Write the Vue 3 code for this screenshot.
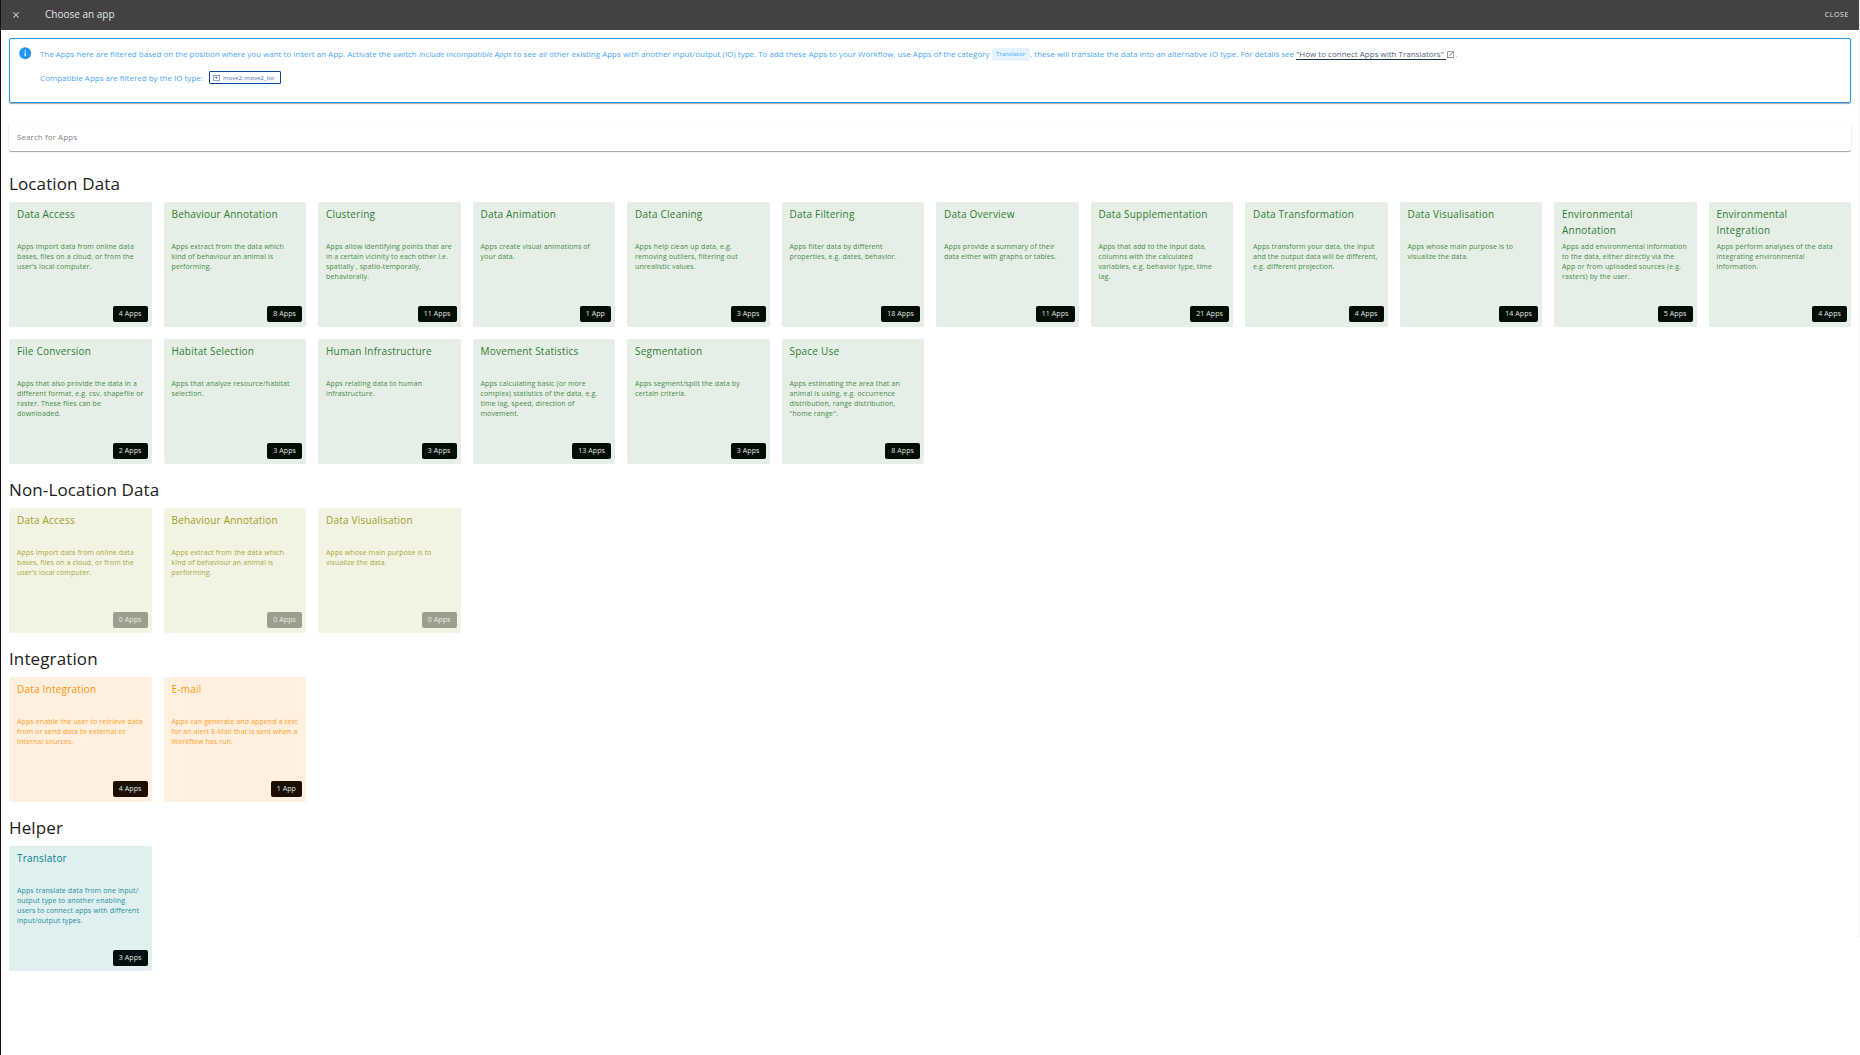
<script setup>
const loc = [
  ['Data Access', 'Apps import data from online data bases, files on a cloud, or from the user\'s local computer.', 4],
  ['Behaviour Annotation', 'Apps extract from the data which kind of behaviour an animal is performing.', 8],
  ['Clustering', 'Apps allow identifying points that are in a certain vicinity to each other i.e. spatially , spatio-temporally, behaviorally.', 11],
  ['Data Animation', 'Apps create visual animations of your data.', 1],
  ['Data Cleaning', 'Apps help clean up data, e.g. removing outliers, filtering out unrealistic values.', 3],
  ['Data Filtering', 'Apps filter data by different properties, e.g. dates, behavior.', 18],
  ['Data Overview', 'Apps provide a summary of their data either with graphs or tables.', 11],
  ['Data Supplementation', 'Apps that add to the input data, columns with the calculated variables, e.g. behavior type, time lag.', 21],
  ['Data Transformation', 'Apps transform your data, the input and the output data will be different, e.g. different projection.', 4],
  ['Data Visualisation', 'Apps whose main purpose is to visualize the data.', 14],
  ['Environmental Annotation', 'Apps add environmental information to the data, either directly via the App or from uploaded sources (e.g. rasters) by the user.', 5],
  ['Environmental Integration', 'Apps perform analyses of the data integrating environmental information.', 4],
  ['File Conversion', 'Apps that also provide the data in a different format, e.g. csv, shapefile or raster. These files can be downloaded.', 2],
  ['Habitat Selection', 'Apps that analyze resource/habitat selection.', 3],
  ['Human Infrastructure', 'Apps relating data to human infrastructure.', 3],
  ['Movement Statistics', 'Apps calculating basic (or more complex) statistics of the data, e.g. time lag, speed, direction of movement.', 13],
  ['Segmentation', 'Apps segment/split the data by certain criteria.', 3],
  ['Space Use', 'Apps estimating the area that an animal is using, e.g. occurrence distribution, range distribution, "home range".', 8],
]
const sections = [
  { name: 'Location Data', tone: 'green', cards: loc },
  { name: 'Non-Location Data', tone: 'olive', cards: [[...loc[0].slice(0, 2), 0], [...loc[1].slice(0, 2), 0], [...loc[9].slice(0, 2), 0]] },
  { name: 'Integration', tone: 'orange', cards: [
    ['Data Integration', 'Apps enable the user to retrieve data from or send data to external or internal sources.', 4],
    ['E-mail', 'Apps can generate and append a text for an alert E-Mail that is sent when a Workflow has run.', 1],
  ] },
  { name: 'Helper', tone: 'teal', cards: [
    ['Translator', 'Apps translate data from one input/\u200boutput type to another enabling users to connect apps with different input/output types.', 3],
  ] },
]
</script>

<template>
  <div class="dialog">
    <header class="bar">
      <svg class="x" viewBox="0 0 24 24"><path d="M19 6.41 17.59 5 12 10.59 6.41 5 5 6.41 10.59 12 5 17.59 6.41 19 12 13.41 17.59 19 19 17.59 13.41 12z" /></svg>
      <span class="bar-title">Choose an app</span>
      <span class="close">CLOSE</span>
    </header>
    <main class="content">
      <div class="info">
        <svg class="info-icon" viewBox="0 0 24 24"><path d="M12 2a10 10 0 1 0 0 20 10 10 0 0 0 0-20zm1 15h-2v-6h2zm0-8h-2V7h2z" /></svg>
        <div class="info-text">
          <p>The Apps here are filtered based on the position where you want to insert an App. Activate the switch <em>include incompatible Apps</em> to see all other existing Apps with another input/output (IO) type. To add these Apps to your Workflow, use Apps of the category <span class="chip">Translator</span>, these will translate the data into an alternative IO type. For details see <a>"How to connect Apps with Translators"&nbsp;</a><svg class="ext" viewBox="0 0 24 24"><path d="M19 19H5V5h7V3H3v18h18v-9h-2zM14 3v2h3.6l-9.8 9.8 1.4 1.4L19 6.4V10h2V3z" /></svg>.</p>
          <p class="second">Compatible Apps are filtered by the IO type: <span class="io"><svg viewBox="0 0 24 24"><path d="M21 3H1v6h2V5h18v14H3v-4H1v6h22V3zM11 16l4-4-4-4v3H1v2h10z" /></svg>move2::move2_loc</span></p>
        </div>
      </div>
      <div class="search">Search for Apps</div>
      <section v-for="s in sections" :key="s.name" :class="s.tone">
        <h2>{{ s.name }}</h2>
        <div class="grid">
          <article v-for="c in s.cards" :key="c[0]" class="card">
            <h3>{{ c[0] }}</h3>
            <p>{{ c[1] }}</p>
            <span class="count" :class="{ empty: !c[2] }">{{ c[2] }} {{ c[2] === 1 ? 'App' : 'Apps' }}</span>
          </article>
        </div>
      </section>
    </main>
    <i class="scroll"></i>
  </div>
</template>

<style>
body { background: #fff; }
</style>

<style scoped>
* { box-sizing: border-box; }
.dialog { position: relative; font-family: "Open Sans", sans-serif; height: 1055px; overflow: hidden; border-left: 1px solid #1d0b17; padding-right: 1px; color: #212121; }
.scroll { position: absolute; right: 0; top: 0; width: 1px; height: 937px; background: #f4f4f4; }
.bar { height: 30px; background: #424242; color: #e6e6e6; display: flex; align-items: center; padding: 0 10px 1px 10px; }
.x { width: 10px; height: 10px; fill: #ddd; }
.bar-title { font-size: 10px; margin: -2px 0 0 24px; flex: 1; }
.close { font-size: 7px; font-weight: 500; letter-spacing: 0.6px; }
.content { padding: 8px 8px 0 8px; }
.info { height: 65px; border: 1px solid #2196f3; border-radius: 2px; box-shadow: 0 1px 1px rgba(0,0,0,.35); display: flex; padding: 9px 7.5px; color: #2196f3; }
.info-icon { flex: none; width: 14.4px; height: 14.4px; fill: #2196f3; margin: -2px 8px 0 0; }
.info-text { margin-top: -1px; color: rgba(33,150,243,.87); }
.info-text p { margin: 0; font-size: 8px; line-height: 14px; height: 14px; white-space: nowrap; }
.info-text .second { margin-top: 10px; }
.chip { display: inline-block; width: 38px; text-align: center; background: #e3f2fd; font-size: 6px; letter-spacing: .05px; line-height: 13px; border-radius: 2px; vertical-align: 1px; height: 13px; margin: -2px 0.5px -2px 0; }
a { color: rgba(31,61,82,.85); border-bottom: 1px solid #1f3d52; display: inline-block; line-height: 8.5px; }
.ext { width: 9px; height: 9px; fill: #777; vertical-align: -2px; }
.io { display: inline-flex; align-items: center; height: 13px; width: 72px; border: 1px solid #0d47a1; border-radius: 1px; color: rgba(13,71,161,.85); font-size: 6px; line-height: 10px; padding: 0 0 0 3px; margin: 0 0 0 4px; vertical-align: top; }
.io svg { flex: none; width: 7.5px; height: 7.5px; fill: #0d47a1; margin-right: 2.5px; }
.search { margin-top: 20px; height: 28px; font-size: 8px; letter-spacing: .075px; line-height: 27px; padding-left: 8px; color: #848484; box-shadow: 0 1px 1px rgba(0,0,0,.35), 0 0 1px rgba(0,0,0,.12); border-radius: 2px; }
section { margin-bottom: 16px; }
h2 { font-size: 17px; font-weight: 400; line-height: 20px; letter-spacing: .12px; margin: 0 0 8px; }
.search + section { margin-top: 23px; }
.grid { display: grid; grid-template-columns: repeat(12, 1fr); gap: 12px; }
.card { position: relative; height: 125px; border-radius: 2px; padding: 4px 8px; background: var(--bg); color: var(--fg); }
h3 { margin: 0; font-size: 10px; font-weight: 500; letter-spacing: .21px; line-height: 16px; height: 36px; }
.card p { margin: 0; font-size: 7px; letter-spacing: .125px; line-height: 10px; opacity: .87; }
.count { position: absolute; right: 4px; bottom: 5px; height: 16px; line-height: 15px; padding: 0 6px; border-radius: 2px; font-size: 7px; letter-spacing: .09px; color: #e0e6e0; background: var(--dark); }
.count.empty { background: #9d9e8e; color: #ecece0; }
.green { --bg: #e5efe5; --fg: #2e7d32; --dark: #040d04; }
.olive { --bg: #f2f3e3; --fg: #9e9d24; --dark: #0d0d04; }
.orange { --bg: #fff0df; --fg: #ff9307; --dark: #1a0f00; }
.teal { --bg: #e0efef; --fg: #00838f; --dark: #000f10; }
</style>
